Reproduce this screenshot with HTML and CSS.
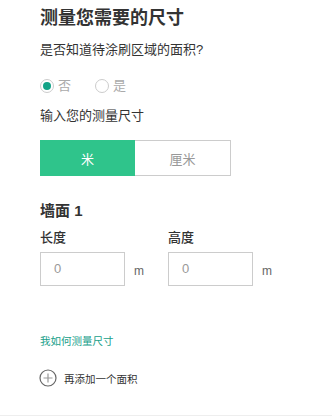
FILE: index.html
```html
<!DOCTYPE html>
<html lang="zh-CN">
<head>
<meta charset="utf-8">
<link rel="stylesheet" href="styles.css">
</head>
<body>
<div class="page">
  <h1 class="title">测量您需要的尺寸</h1>
  <p class="question">是否知道待涂刷区域的面积?</p>
  <div class="radios">
    <label class="radio"><span class="dot checked"></span><span class="rlabel">否</span></label>
    <label class="radio"><span class="dot"></span><span class="rlabel">是</span></label>
  </div>
  <p class="question q2">输入您的测量尺寸</p>
  <div class="toggle">
    <div class="seg active">米</div>
    <div class="seg">厘米</div>
  </div>
  <h2 class="wall">墙面 1</h2>
  <div class="fields">
    <div class="field">
      <div class="flabel">长度</div>
      <div class="frow"><div class="input">0</div><span class="unit">m</span></div>
    </div>
    <div class="field">
      <div class="flabel">高度</div>
      <div class="frow"><div class="input">0</div><span class="unit">m</span></div>
    </div>
  </div>
  <a class="link">我如何测量尺寸</a>
  <div class="add">
    <svg class="plus" width="18" height="18" viewBox="0 0 18 18"><circle cx="9" cy="9" r="8" fill="none" stroke="#666" stroke-width="1.2"/><path d="M9 4.5v9M4.5 9h9" stroke="#999" stroke-width="1.2"/></svg>
    <span class="addtext">再添加一个面积</span>
  </div>
</div>
<div class="footer"></div>
</body>
</html>
```
FILE: styles.css
```css
html, body { margin: 0; padding: 0; background: #fff; }
body { font-family: "Liberation Sans", "Noto Sans CJK SC", sans-serif; color: #333; }
.page { padding: 6px 0 0 40px; }
.title { margin: 0; font-size: 18px; line-height: 24px; font-weight: bold; color: #333; }
.question { margin: 10px 0 0; font-size: 13px; line-height: 20px; color: #333; }
.q2 { margin-top: 10px; }
.radios { display: flex; margin-top: 16px; height: 20px; align-items: center; }
.radio { display: flex; align-items: center; width: 55px; }
.dot { box-sizing: border-box; width: 14px; height: 14px; border: 1px solid #ccc; border-radius: 50%; display: flex; align-items: center; justify-content: center; }
.dot.checked::after { content: ""; width: 8px; height: 8px; border-radius: 50%; background: #13a387; }
.rlabel { margin-left: 4px; font-size: 13px; color: #aaa; line-height: 20px; }
.toggle { display: flex; margin-top: 14px; width: 191px; height: 36px; box-sizing: border-box; border: 1px solid #ccc; }
.seg { flex: 1; display: flex; align-items: center; justify-content: center; font-size: 13px; color: #999; }
.seg.active { background: #2fc48b; color: #fff; margin: -1px 0 -1px -1px; }
.wall { margin: 25px 0 0; font-size: 15px; line-height: 20px; font-weight: 600; color: #333; }
.fields { display: flex; margin-top: 7px; }
.field { width: 128px; }
.flabel { font-size: 13px; line-height: 20px; font-weight: 500; color: #333; }
.frow { display: flex; align-items: center; margin-top: 4px; }
.input { box-sizing: border-box; width: 85px; height: 34px; border: 1px solid #ccc; padding-left: 13px; font-size: 13px; line-height: 32px; color: #999; }
.unit { margin-left: 9px; margin-top: 4px; font-size: 12px; color: #666; }
.link { display: block; margin-top: 45px; font-size: 10.5px; line-height: 20px; color: #20a08a; }
.add { display: flex; align-items: center; margin-top: 17px; height: 20px; margin-left: -1px; }
.addtext { margin-left: 7px; font-size: 10.5px; color: #333; }
.footer { margin-top: 27px; height: 10px; background: #eee; }
```
